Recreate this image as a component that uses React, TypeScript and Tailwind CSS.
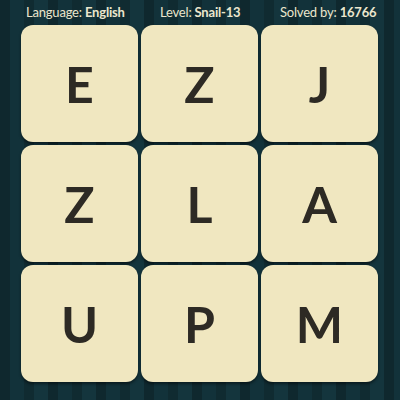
const LETTERS = ["E", "Z", "J", "Z", "L", "A", "U", "P", "M"];

export default function App() {
  return (
    <div
      className="w-[400px] h-[400px] overflow-hidden bg-[#112d34] bg-[repeating-linear-gradient(90deg,#0f282e_0px,#0f282e_10px,#12323a_10px,#12323a_24px,#102b31_24px,#102b31_34px,#14353d_34px,#14353d_48px)]"
      style={{ fontFamily: "Lato, 'Open Sans', sans-serif" }}
    >
      {/* Header */}
      <div className="h-[25px] flex items-center pl-[26px] text-[13px] tracking-[-0.2px] text-[#ebe6cd] leading-none">
        <span className="w-[134px] shrink-0">
          Language: <span className="font-bold">English</span>
        </span>
        <span className="w-[120px] shrink-0">
          Level: <span className="font-bold">Snail-13</span>
        </span>
        <span>
          Solved by: <span className="font-bold">16766</span>
        </span>
      </div>

      {/* Tiles */}
      <div className="grid grid-cols-3 gap-[3px] pl-[21px] pr-[22px]">
        {LETTERS.map((l, i) => (
          <div
            key={i}
            className="h-[117px] rounded-[12px] bg-[#f0e7c0] shadow-[0_2px_3px_rgba(0,0,0,0.45)] flex items-center justify-center text-[50px] font-bold text-[#2d2a24] leading-none"
          >
            {l}
          </div>
        ))}
      </div>
    </div>
  );
}
